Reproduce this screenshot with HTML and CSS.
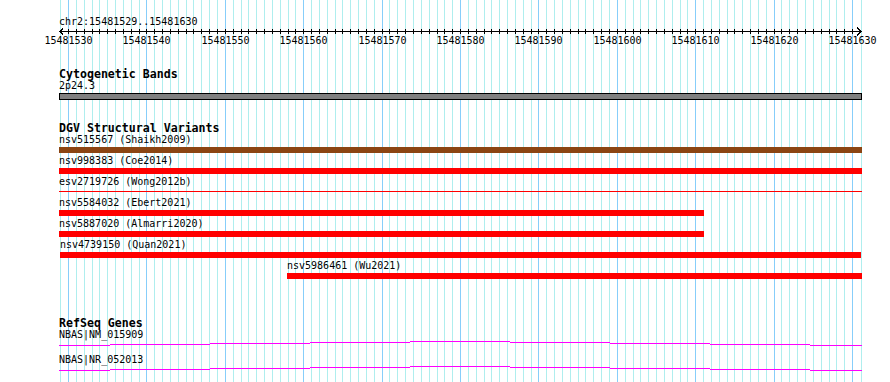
FILE: index.html
```html
<!DOCTYPE html>
<html lang="en">
<head>
	<meta charset="UTF-8" />
	<title>chr2:15481529..15481630</title>
	<link rel="stylesheet" href="styles.css">
</head>
<body>
	<div class="panel">
		<svg class="grid" id="grid" width="890" height="382" aria-hidden="true"></svg>

		<div class="ruler">
			<div class="locus">chr2:15481529..15481630</div>
			<svg class="scale" id="scale" width="890" height="20"></svg>
		</div>

		<section class="track cyto">
			<h2>Cytogenetic Bands</h2>
			<div class="feature">
				<div class="name">2p24.3</div>
				<div class="band"></div>
			</div>
		</section>

		<section class="track dgv">
			<h2>DGV Structural Variants</h2>
			<div class="feature">
				<div class="name">nsv515567 (Shaikh2009)</div>
				<div class="bar gain"></div>
			</div>
			<div class="feature">
				<div class="name">nsv998383 (Coe2014)</div>
				<div class="bar"></div>
			</div>
			<div class="feature">
				<div class="name">esv2719726 (Wong2012b)</div>
				<div class="bar thin"></div>
			</div>
			<div class="feature" style="width:645px">
				<div class="name">nsv5584032 (Ebert2021)</div>
				<div class="bar"></div>
			</div>
			<div class="feature" style="width:645px">
				<div class="name">nsv5887020 (Almarri2020)</div>
				<div class="bar"></div>
			</div>
			<div class="feature" style="margin-left:1px;width:801px">
				<div class="name">nsv4739150 (Quan2021)</div>
				<div class="bar"></div>
			</div>
			<div class="feature" style="margin-left:228px;width:575px">
				<div class="name">nsv5986461 (Wu2021)</div>
				<div class="bar"></div>
			</div>
		</section>

		<section class="track genes">
			<h2>RefSeq Genes</h2>
			<div class="feature">
				<div class="name">NBAS|NM_015909</div>
				<svg class="intron" width="803" height="14"><path d="M0 5.5H51M51 4.5H151M151 3.5H251M251 2.5H351M351 1.5H451M451 2.5H551M551 3.5H651M651 4.5H751M751 5.5H803"/></svg>
			</div>
			<div class="feature">
				<div class="name">NBAS|NR_052013</div>
				<svg class="intron" width="803" height="14"><path d="M0 5.5H51M51 4.5H151M151 3.5H251M251 2.5H351M351 1.5H451M451 2.5H551M551 3.5H651M651 4.5H751M751 5.5H803"/></svg>
			</div>
		</section>
	</div>

	<script>
  // bases 15481529..15481630, one grid line per base
  const start = 15481529;
  const bases = 102;
  const grid = document.getElementById("grid");
  const scale = document.getElementById("scale");
  let lines = "";
  let ruler = '<path class="axis" d="M60 4.5H861M63 1.5L60 4.5L63 7.5M857 0.5L861 4.5L857 8.5"/>';

  for (let k = 0; k < bases; k++) {
    const x = Math.round(60.2 + 7.84 * k) + 0.5;
    const pos = start + k;
    const major = pos % 10 === 0;
    lines += `<line class="${major ? "major" : "minor"}" x1="${x}" y1="0" x2="${x}" y2="382"/>`;
    if (k > 0) ruler += `<line class="tick" x1="${x}" y1="2" x2="${x}" y2="7"/>`;
    if (major) ruler += `<text x="${x}" y="17">${pos}</text>`;
  }
  lines += '<line class="minor" x1="861.5" y1="0" x2="861.5" y2="382"/>';

  grid.innerHTML = lines;
  scale.innerHTML = ruler;
</script>
</body>
</html>
```

FILE: styles.css
```css
body {
	margin: 0;
	background-color: #fff;
	font-family: "DejaVu Sans Mono", "Liberation Mono", monospace;
	font-size: 10px;
	color: #000;
}
.panel {
	position: relative;
	width: 890px;
	height: 382px;
	overflow: hidden;
}
.grid {
	position: absolute;
	top: 0;
	left: 0;
	shape-rendering: crispEdges;
}
.grid .minor {
	stroke: #afeeee;
	stroke-width: 1;
}
.grid .major {
	stroke: #87cefa;
	stroke-width: 1;
}
.ruler,
.track {
	position: relative;
}
.locus {
	margin: 16px 0 0 59px;
	line-height: 11px;
}
.scale {
	display: block;
	shape-rendering: crispEdges;
}
.scale .axis,
.scale .tick {
	stroke: #000;
	stroke-width: 1;
	fill: none;
}
.scale text {
	font-family: "DejaVu Sans Mono", "Liberation Mono", monospace;
	font-size: 10px;
	text-anchor: middle;
	fill: #000;
}
.track {
	padding-left: 59px;
}
.track h2 {
	margin: 0;
	font-size: 11.6px;
	line-height: 12px;
	font-weight: bold;
}
.cyto {
	margin-top: 21px;
}
.dgv {
	margin-top: 20px;
}
.genes {
	margin-top: 36px;
}
.feature {
	width: 803px;
	padding-bottom: 2px;
}
.genes .feature {
	padding-bottom: 0;
}
.name {
	line-height: 11px;
	white-space: nowrap;
}
.band {
	margin-top: 2px;
	height: 5px;
	border: 1px solid #000;
	background-color: #808080;
}
.bar {
	margin-top: 2px;
	height: 6px;
	background-color: #f00;
}
.bar.gain {
	background-color: #8b4513;
}
.bar.thin {
	height: 1px;
	margin: 4px 0 3px 0;
}
.intron {
	display: block;
	shape-rendering: crispEdges;
}
.intron path {
	stroke: #f0f;
	stroke-width: 1;
	fill: none;
}
```
